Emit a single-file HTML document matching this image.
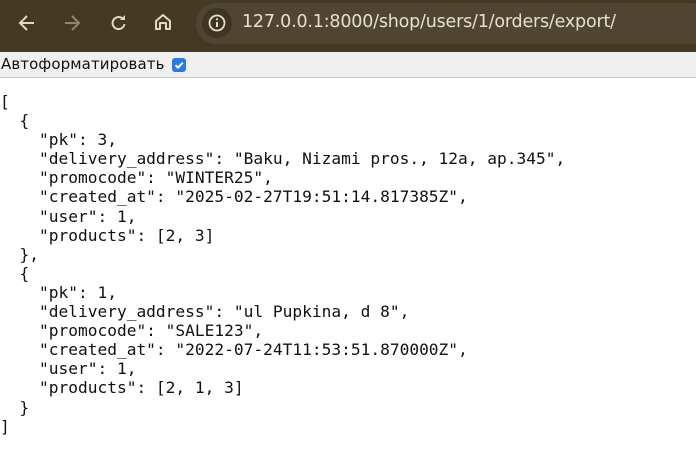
<!DOCTYPE html>
<html><head><meta charset="utf-8"><style>
*{margin:0;padding:0;box-sizing:border-box}
body{width:696px;height:469px;overflow:hidden;background:#fff;position:relative;font-family:"Liberation Sans",sans-serif}
.top{position:absolute;left:0;top:0;width:696px;height:52px;background:#443923}
.url{position:absolute;left:196px;top:3px;width:520px;height:41px;border-radius:21px;background:#504531}
.info{position:absolute;left:202px;top:8px;width:30px;height:30px;border-radius:15px;background:#3f3523}
.urltxt{position:absolute;left:242px;top:12px;font-size:17.5px;color:#e6dfcf;font-family:"DejaVu Sans",sans-serif;letter-spacing:-0.2px}
.tb{position:absolute;left:0;top:52px;width:696px;height:26px;background:#f0f0f0;border-bottom:1px solid #c8c8c8}
.tb span{position:absolute;left:1px;top:3px;font-family:"DejaVu Sans",sans-serif;font-size:15px;color:#111;letter-spacing:0.1px}
.cb{position:absolute;left:172px;top:58px;width:14px;height:14px;border-radius:3px;background:#2a7ae2}
pre{position:absolute;left:0;top:92px;font-family:"DejaVu Sans Mono",monospace;font-size:16.2px;line-height:19.1px;color:#111}
svg{position:absolute}
</style></head><body>
<div class="top"></div>
<svg style="left:16px;top:12px" width="22" height="22" viewBox="0 0 22 22"><path d="M18 11H5M11 4l-7 7 7 7" stroke="#e0d8c6" stroke-width="2" fill="none"/></svg>
<svg style="left:61px;top:12px" width="22" height="22" viewBox="0 0 22 22"><path d="M4 11h13M11 4l7 7-7 7" stroke="#8f8573" stroke-width="2" fill="none"/></svg>
<svg style="left:108px;top:12px" width="22" height="22" viewBox="0 0 22 22"><path d="M16.5 12a6 6 0 1 1-1.7-5.2" stroke="#e0d8c6" stroke-width="2" fill="none"/><path d="M17 3v5h-5z" fill="#e0d8c6"/></svg>
<svg style="left:152px;top:11px" width="22" height="22" viewBox="0 0 22 22"><path d="M4 10l7-6 7 6v8h-4v-6H8v6H4z" stroke="#e0d8c6" stroke-width="2" fill="none" stroke-linejoin="round"/></svg>
<div class="url"></div><div class="info"></div>
<svg style="left:207px;top:13px" width="20" height="20" viewBox="0 0 20 20"><circle cx="10" cy="10" r="7.5" stroke="#e6dfcf" stroke-width="1.8" fill="none"/><path d="M10 9v5" stroke="#e6dfcf" stroke-width="2"/><circle cx="10" cy="6.3" r="1.1" fill="#e6dfcf"/></svg>
<div class="urltxt">127.0.0.1:8000/shop/users/1/orders/export/</div>
<div class="tb"><span>Автоформатировать</span></div>
<div class="cb"></div>
<svg style="left:172px;top:58px" width="14" height="14" viewBox="0 0 14 14"><path d="M3.5 7.2l2.5 2.5 4.8-5" stroke="#fff" stroke-width="2" fill="none"/></svg>
<pre>[
  {
    "pk": 3,
    "delivery_address": "Baku, Nizami pros., 12a, ap.345",
    "promocode": "WINTER25",
    "created_at": "2025-02-27T19:51:14.817385Z",
    "user": 1,
    "products": [2, 3]
  },
  {
    "pk": 1,
    "delivery_address": "ul Pupkina, d 8",
    "promocode": "SALE123",
    "created_at": "2022-07-24T11:53:51.870000Z",
    "user": 1,
    "products": [2, 1, 3]
  }
]</pre>
</body></html>
